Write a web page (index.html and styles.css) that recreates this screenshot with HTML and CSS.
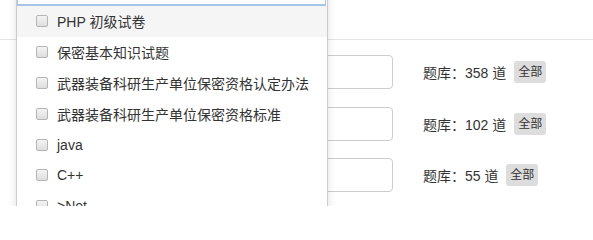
FILE: index.html
```html
<!DOCTYPE html>
<html lang="zh">
<head>
<meta charset="utf-8">
<title>题库</title>
<link rel="stylesheet" href="styles.css">
</head>
<body>
<div class="page">
  <div class="topbar"></div>
  <div class="rows">
    <div class="row">
      <div class="field"></div>
      <div class="info">题库：358 道 <span class="tag">全部</span></div>
    </div>
    <div class="row">
      <div class="field"></div>
      <div class="info">题库：102 道 <span class="tag">全部</span></div>
    </div>
    <div class="row">
      <div class="field"></div>
      <div class="info">题库：55 道 <span class="tag">全部</span></div>
    </div>
  </div>

  <div class="dropdown">
    <div class="search"></div>
    <ul class="options">
      <li class="option active"><span class="check"></span><span>PHP 初级试卷</span></li>
      <li class="option"><span class="check"></span><span>保密基本知识试题</span></li>
      <li class="option"><span class="check"></span><span>武器装备科研生产单位保密资格认定办法</span></li>
      <li class="option"><span class="check"></span><span>武器装备科研生产单位保密资格标准</span></li>
      <li class="option"><span class="check"></span><span>java</span></li>
      <li class="option"><span class="check"></span><span>C++</span></li>
      <li class="option"><span class="check"></span><span>&gt;Net</span></li>
    </ul>
  </div>
</div>
</body>
</html>
```

FILE: styles.css
```css
html, body {
  margin: 0;
  padding: 0;
  background: #fff;
}
body {
  font-family: "Liberation Sans", "Noto Sans CJK SC", sans-serif;
  color: #333;
  font-size: 14px;
  overflow: hidden;
}
.page {
  position: relative;
  width: 593px;
  height: 206px;
  overflow: hidden;
}
.topbar {
  height: 39px;
  border-bottom: 1px solid #e5e5e5;
}
.rows {
  display: flex;
  flex-direction: column;
  gap: 17.5px;
  padding-top: 15px;
}
.row {
  display: flex;
  align-items: center;
  height: 34px;
}
.field {
  box-sizing: border-box;
  margin-left: 180px;
  width: 213px;
  height: 34px;
  border: 1px solid #ccc;
  border-radius: 4px;
  background: #fff;
}
.info {
  margin-left: 30px;
  display: flex;
  align-items: center;
  white-space: pre;
  font-size: 14px;
  color: #333;
}
.tag {
  display: inline-block;
  background: #ddd;
  color: #333;
  font-size: 12px;
  line-height: 22px;
  padding: 0 4px;
  border-radius: 3px;
  margin-left: 4px;
}
.dropdown {
  position: absolute;
  left: 16px;
  top: -30px;
  width: 312px;
  box-sizing: border-box;
  border: 1px solid #ccc;
  background: #fff;
  box-shadow: 0 3px 8px rgba(0, 0, 0, 0.12);
}
.search {
  box-sizing: border-box;
  height: 35px;
  margin-right: 1px;
  border: 1px solid #a6c4ea;
  border-bottom: 2px solid #a6c4ea;
  background: #fdfeff;
}
.options {
  list-style: none;
  margin: 0;
  padding: 0;
}
.option {
  display: flex;
  align-items: center;
  height: 30.8px;
  padding-left: 19px;
  font-size: 14px;
  color: #333;
}
.option.active {
  background: #f5f5f5;
}
.check {
  box-sizing: border-box;
  width: 12px;
  height: 12px;
  border: 1px solid #b5b5b5;
  border-radius: 2px;
  background: linear-gradient(#f4f4f4, #dedede);
  margin-right: 9px;
  flex: none;
}
```
